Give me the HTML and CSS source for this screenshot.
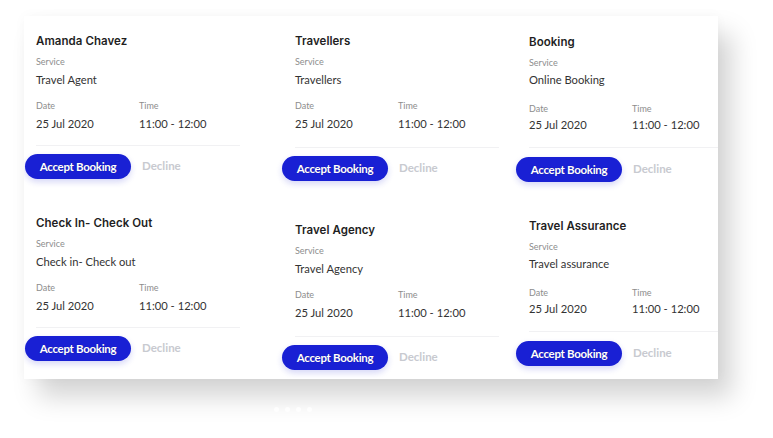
FILE: index.html
```html
<!DOCTYPE html>
<html lang="en">
<head>
<meta charset="utf-8">
<title>Bookings</title>
<link rel="stylesheet" href="styles.css">
</head>
<body>
<div class="stage">
  <div class="panel">
    <div class="col col-1">
      <div class="card">
        <div class="title">Amanda Chavez</div>
        <div class="label">Service</div>
        <div class="value">Travel Agent</div>
        <div class="meta">
          <div class="meta-item"><div class="label">Date</div><div class="value">25 Jul 2020</div></div>
          <div class="meta-item"><div class="label">Time</div><div class="value">11:00 - 12:00</div></div>
        </div>
        <div class="sep"></div>
        <div class="actions"><button class="btn-accept">Accept Booking</button><span class="decline">Decline</span></div>
      </div>
      <div class="card">
        <div class="title">Check In- Check Out</div>
        <div class="label">Service</div>
        <div class="value">Check in- Check out</div>
        <div class="meta">
          <div class="meta-item"><div class="label">Date</div><div class="value">25 Jul 2020</div></div>
          <div class="meta-item"><div class="label">Time</div><div class="value">11:00 - 12:00</div></div>
        </div>
        <div class="sep"></div>
        <div class="actions"><button class="btn-accept">Accept Booking</button><span class="decline">Decline</span></div>
      </div>
    </div>
    <div class="col col-2">
      <div class="card">
        <div class="title">Travellers</div>
        <div class="label">Service</div>
        <div class="value">Travellers</div>
        <div class="meta">
          <div class="meta-item"><div class="label">Date</div><div class="value">25 Jul 2020</div></div>
          <div class="meta-item"><div class="label">Time</div><div class="value">11:00 - 12:00</div></div>
        </div>
        <div class="sep"></div>
        <div class="actions"><button class="btn-accept">Accept Booking</button><span class="decline">Decline</span></div>
      </div>
      <div class="card">
        <div class="title">Travel Agency</div>
        <div class="label">Service</div>
        <div class="value">Travel Agency</div>
        <div class="meta">
          <div class="meta-item"><div class="label">Date</div><div class="value">25 Jul 2020</div></div>
          <div class="meta-item"><div class="label">Time</div><div class="value">11:00 - 12:00</div></div>
        </div>
        <div class="sep"></div>
        <div class="actions"><button class="btn-accept">Accept Booking</button><span class="decline">Decline</span></div>
      </div>
    </div>
    <div class="col col-3">
      <div class="card">
        <div class="title">Booking</div>
        <div class="label">Service</div>
        <div class="value">Online Booking</div>
        <div class="meta">
          <div class="meta-item"><div class="label">Date</div><div class="value">25 Jul 2020</div></div>
          <div class="meta-item"><div class="label">Time</div><div class="value">11:00 - 12:00</div></div>
        </div>
        <div class="sep"></div>
        <div class="actions"><button class="btn-accept">Accept Booking</button><span class="decline">Decline</span></div>
      </div>
      <div class="card">
        <div class="title">Travel Assurance</div>
        <div class="label">Service</div>
        <div class="value">Travel assurance</div>
        <div class="meta">
          <div class="meta-item"><div class="label">Date</div><div class="value">25 Jul 2020</div></div>
          <div class="meta-item"><div class="label">Time</div><div class="value">11:00 - 12:00</div></div>
        </div>
        <div class="sep"></div>
        <div class="actions"><button class="btn-accept">Accept Booking</button><span class="decline">Decline</span></div>
      </div>
    </div>
  </div>
  <div class="dots"><span></span><span></span><span></span><span></span></div>
</div>
</body>
</html>
```
FILE: styles.css
```css
* { box-sizing: border-box; }
html, body { margin: 0; padding: 0; background: #ffffff; }
body {
  width: 773px;
  height: 438px;
  overflow: hidden;
  font-family: Lato, "Liberation Sans", sans-serif;
  color: #333;
}
.stage {
  padding: 16px 0 0 24px;
}
.panel {
  width: 694px;
  height: 363px;
  background: #fff;
  display: grid;
  grid-template-columns: 259px 234px 201px;
  overflow: hidden;
  box-shadow: 14px 18px 24px rgba(0, 0, 0, 0.17), 0 0 12px rgba(0, 0, 0, 0.03);
}
.col {
  display: flex;
  flex-direction: column;
  padding-left: 12px;
}
.col-1 { padding-top: 18px; gap: 37px; }
.col-2 { padding-top: 18px; gap: 42px; }
.col-3 { padding-top: 19px; gap: 37px; }
.card {
  display: flex;
  flex-direction: column;
}
.title {
  font-family: Inter, "Noto Sans", sans-serif;
  font-weight: 600;
  font-size: 11.5px;
  line-height: 14px;
  letter-spacing: 0.05px;
  color: #1f1f1f;
  margin-bottom: 8px;
}
.label {
  font-size: 9px;
  line-height: 11px;
  color: #8d8d8d;
}
.value {
  font-size: 11.2px;
  line-height: 15px;
  color: #333;
  margin-top: 5px;
}
.col-3 .value { margin-top: 4px; }
.meta {
  display: flex;
  margin-top: 13px;
}
.col-3 .meta { margin-top: 16px; }
.meta-item { width: 103px; flex-shrink: 0; }
.meta .value { margin-top: 5px; }
.col-3 .meta .value { margin-top: 3px; }
.sep {
  width: 204px;
  flex-shrink: 0;
  height: 1px;
  background: #f1f1f3;
  margin-top: 14px;
}
.col-2 .sep { margin-top: 16px; }
.col-3 .sep { margin-top: 15px; }
.actions {
  display: flex;
  align-items: center;
  margin-top: 8px;
  margin-left: -11px;
}
.col-2 .actions { margin-left: -13px; margin-top: 8px; }
.col-3 .actions { margin-left: -13px; margin-top: 9px; }
.btn-accept {
  border: 0;
  height: 25px;
  width: 106px;
  flex-shrink: 0;
  border-radius: 13px;
  background: #1920d4;
  color: #fff;
  font-family: Lato, "Liberation Sans", sans-serif;
  font-weight: 700;
  font-size: 11.5px;
  letter-spacing: -0.3px;
  padding: 0;
  box-shadow: 0 3px 6px rgba(25, 32, 212, 0.18);
  text-shadow: 0 0 1px rgba(0, 0, 40, 0.4);
}
.decline {
  margin-left: 11px;
  margin-top: -3px;
  font-weight: 700;
  font-size: 11.5px;
  color: #c8cad0;
}
.dots {
  display: flex;
  gap: 6px;
  margin: 28px 0 0 250px;
}
.dots span {
  width: 5px;
  height: 5px;
  border-radius: 50%;
  background: rgba(255, 255, 255, 0.8);
}
```
